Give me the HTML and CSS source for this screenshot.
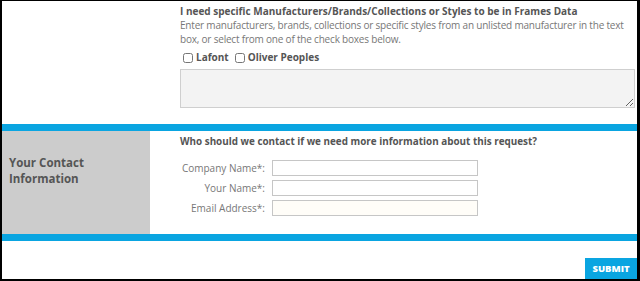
FILE: index.html
```html
<!DOCTYPE html>
<html lang="en">
<head>
    <meta charset="UTF-8">
    <meta name="viewport" content="width=device-width, initial-scale=1.0">
    <title>Frames Data Request</title>
    <link rel="stylesheet" href="styles.css">
</head>
<body>
    <div class="frame">
        <form class="page" id="requestForm">
            <div class="section top">
                <div class="side"></div>
                <div class="main">
                    <h3>I need specific Manufacturers/Brands/Collections or Styles to be in Frames Data</h3>
                    <p class="hint">Enter manufacturers, brands, collections or specific styles from an unlisted manufacturer in the text box, or select from one of the check boxes below.</p>
                    <div class="checks">
                        <label><input type="checkbox"> Lafont</label>
                        <label><input type="checkbox"> Oliver Peoples</label>
                    </div>
                    <textarea class="notes"></textarea>
                </div>
            </div>

            <div class="bar"></div>

            <div class="section contact">
                <div class="side gray">
                    <h2>Your Contact Information</h2>
                </div>
                <div class="main">
                    <h3>Who should we contact if we need more information about this request?</h3>
                    <div class="fields">
                        <label for="company">Company Name*:</label>
                        <input type="text" id="company">
                        <label for="yourName">Your Name*:</label>
                        <input type="text" id="yourName">
                        <label for="email">Email Address*:</label>
                        <input type="text" id="email" class="email">
                    </div>
                </div>
            </div>

            <div class="bar"></div>

            <div class="footer">
                <button type="button">SUBMIT</button>
            </div>
        </form>
    </div>
</body>
</html>
```

FILE: styles.css
```css
html, body {
    margin: 0;
    padding: 0;
    background: #000;
}
body {
    font-family: "Open Sans", Arial, sans-serif;
    color: #555;
}
.frame {
    padding: 1px 3px 2px 2px;
    height: 278px;
}
.page {
    background: #fff;
    height: 100%;
    display: flex;
    flex-direction: column;
}
.section {
    display: flex;
}
.side {
    width: 148px;
    flex-shrink: 0;
}
.side.gray {
    background: #cccccc;
}
.main {
    flex: 1;
    padding-left: 30px;
    padding-right: 2px;
}
.top {
    height: 123px;
}
.top .main {
    padding-top: 3px;
}
h3 {
    margin: 0;
    font-size: 10px;
    font-weight: bold;
    line-height: 14px;
    color: #555;
}
.contact h3 {
    font-size: 9.9px;
}
.hint {
    margin: 0;
    font-size: 10px;
    letter-spacing: -0.2px;
    line-height: 14px;
    color: #777;
}
.checks {
    display: flex;
    gap: 3px;
    margin-top: 4px;
    font-size: 10px;
    font-weight: bold;
    line-height: 15px;
}
.checks label {
    display: flex;
    align-items: center;
}
.checks input {
    width: 10px;
    height: 10px;
    margin: 0 3px 0 3px;
}
.notes {
    display: block;
    box-sizing: border-box;
    width: 100%;
    height: 39px;
    margin-top: 4px;
    background: #f3f3f3;
    border: 1px solid #cfcfcf;
    border-radius: 0;
    resize: vertical;
}
.bar {
    height: 7px;
    background: #0aa5e1;
    flex-shrink: 0;
}
.contact {
    height: 103px;
}
.contact .main {
    padding-top: 3px;
}
.side h2 {
    margin: 24px 0 0 7px;
    font-size: 11.5px;
    font-weight: bold;
    line-height: 16px;
    color: #555;
}
.fields {
    display: grid;
    grid-template-columns: 85px 206px;
    column-gap: 7px;
    row-gap: 4px;
    margin-top: 12px;
    align-items: center;
}
.fields label {
    text-align: right;
    white-space: nowrap;
    font-size: 10px;
    line-height: 15px;
    color: #777;
}
.fields input {
    box-sizing: border-box;
    height: 16px;
    margin: 0;
    border: 1px solid #c6c6c6;
    padding: 0 3px;
}
.fields input.email {
    background: #fffdf8;
}
.footer {
    flex: 1;
    display: flex;
    justify-content: flex-end;
    align-items: flex-end;
}
button {
    width: 52px;
    height: 21px;
    border: none;
    background: #0aa5e1;
    color: #fff;
    font-family: "Open Sans", Arial, sans-serif;
    font-size: 9.5px;
    font-weight: 800;
    padding: 0;
    cursor: pointer;
}
```
